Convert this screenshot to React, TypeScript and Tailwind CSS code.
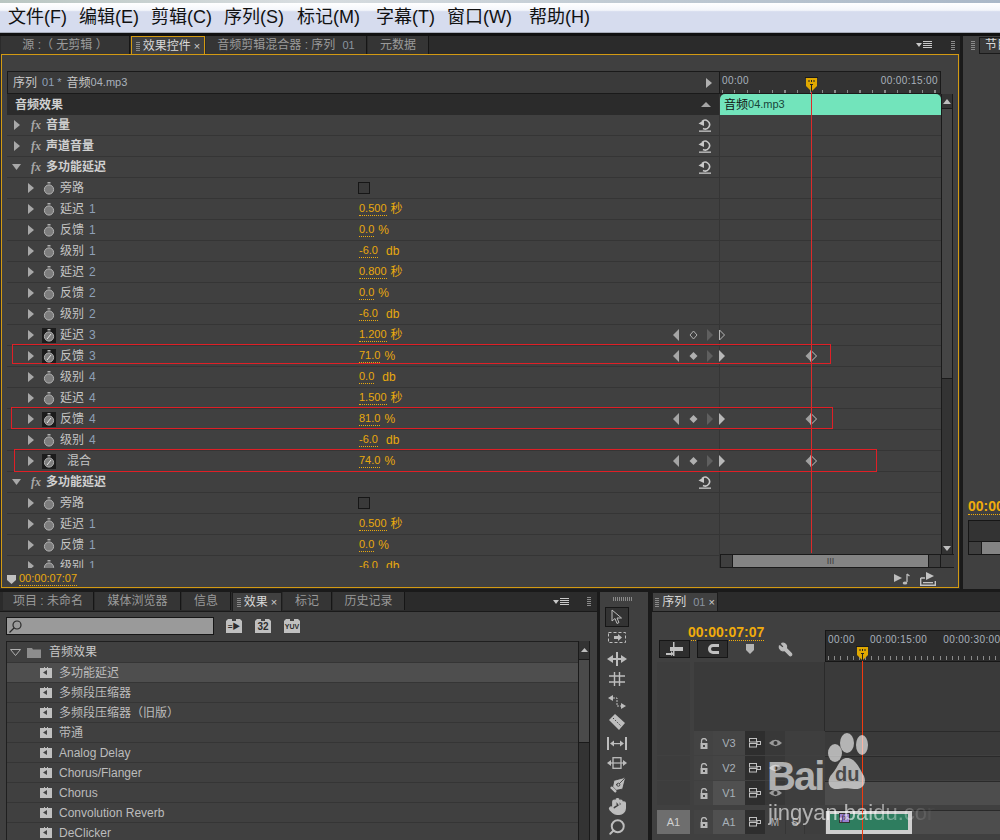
import React from 'react';
import { Hand, PenTool, Search, Wrench } from 'lucide-react';

type ParamRow = {
  name: string;
  num?: string;
  value?: string;
  unit?: string;
  active?: boolean;
  nav?: 'open' | 'filled';
  kf?: boolean;
  bypass?: boolean;
  indent?: boolean;
};

const params: ParamRow[] = [
  { name: '旁路', bypass: true },
  { name: '延迟', num: '1', value: '0.500', unit: '秒' },
  { name: '反馈', num: '1', value: '0.0', unit: '%' },
  { name: '级别', num: '1', value: '-6.0', unit: 'db' },
  { name: '延迟', num: '2', value: '0.800', unit: '秒' },
  { name: '反馈', num: '2', value: '0.0', unit: '%' },
  { name: '级别', num: '2', value: '-6.0', unit: 'db' },
  { name: '延迟', num: '3', value: '1.200', unit: '秒', active: true, nav: 'open' },
  { name: '反馈', num: '3', value: '71.0', unit: '%', active: true, nav: 'filled', kf: true },
  { name: '级别', num: '4', value: '0.0', unit: 'db' },
  { name: '延迟', num: '4', value: '1.500', unit: '秒' },
  { name: '反馈', num: '4', value: '81.0', unit: '%', active: true, nav: 'filled', kf: true },
  { name: '级别', num: '4', value: '-6.0', unit: 'db' },
  { name: '混合', value: '74.0', unit: '%', active: true, nav: 'filled', kf: true, indent: true },
];

const secondGroup: ParamRow[] = [
  { name: '旁路', bypass: true },
  { name: '延迟', num: '1', value: '0.500', unit: '秒' },
  { name: '反馈', num: '1', value: '0.0', unit: '%' },
  { name: '级别', num: '1', value: '-6.0', unit: 'db' },
];

const effects = ['多功能延迟', '多频段压缩器', '多频段压缩器（旧版）', '带通', 'Analog Delay', 'Chorus/Flanger', 'Chorus', 'Convolution Reverb', 'DeClicker'];

function Twirl({ open = false }: { open?: boolean }) {
  return (
    <svg width="10" height="10" viewBox="0 0 10 10" className="shrink-0">
      {open ? <polygon points="0,2 9,2 4.5,8" fill="#a8a8a8" /> : <polygon points="2,0 8,5 2,10" fill="#a8a8a8" />}
    </svg>
  );
}

function Stopwatch({ active }: { active?: boolean }) {
  return (
    <div className={`w-[14px] h-[15px] flex items-center justify-center shrink-0 ${active ? 'bg-[#1b1b1b]' : ''}`}>
      <svg width="12" height="13" viewBox="0 0 12 13">
        <rect x="4.5" y="0" width="3" height="1.5" fill="#b0b0b0" />
        <circle cx="6" cy="7.5" r="4.6" fill="#7d7d7d" stroke="#b5b5b5" strokeWidth="1" />
        {active && <line x1="4" y1="10" x2="8" y2="5" stroke="#e8e8e8" strokeWidth="1" />}
      </svg>
    </div>
  );
}

function ResetIcon() {
  return (
    <svg width="14" height="15" viewBox="0 0 14 15" className="shrink-0">
      <path d="M4 3.5 A4.4 4.4 0 1 1 5 10.5" fill="none" stroke="#c8c8c8" strokeWidth="1.6" />
      <polygon points="0.5,5.5 6,2 6,8" fill="#c8c8c8" />
      <rect x="1" y="12.5" width="12" height="1.3" fill="#c8c8c8" />
    </svg>
  );
}

function KeyNav({ mode }: { mode: 'open' | 'filled' }) {
  return (
    <svg width="53" height="12" viewBox="0 0 53 12" className="shrink-0 ml-auto -mr-[7px] relative">
      <polygon points="0,6 6,0 6,12" fill="#a5a5a5" />
      {mode === 'filled' ? (
        <polygon points="20.5,2 24.5,6 20.5,10 16.5,6" fill="#b0b0b0" />
      ) : (
        <polygon points="20.5,2 24,6 20.5,10 17,6" fill="none" stroke="#b0b0b0" />
      )}
      <polygon points="34,0 40,6 34,12" fill="#5f5f5f" />
      {mode === 'filled' ? (
        <polygon points="46,0 52,6 46,12" fill="#b8b8b8" />
      ) : (
        <polygon points="46.5,1 51.5,6 46.5,11" fill="none" stroke="#b8b8b8" />
      )}
    </svg>
  );
}

function Keyframe() {
  return (
    <svg width="12" height="12" viewBox="0 0 12 12" className="shrink-0">
      <polygon points="6,0.5 0.5,6 6,11.5" fill="#a0a0a0" />
      <polygon points="6,0.5 11.5,6 6,11.5" fill="none" stroke="#c4c4c4" />
    </svg>
  );
}

function MarkerHead() {
  return (
    <svg width="13" height="15" viewBox="0 0 13 15" className="shrink-0">
      <rect x="0" y="0" width="13" height="1" fill="#1b1b1b" />
      <polygon points="1,1 12,1 12,9 7,14 6,14 1,9" fill="#e0a800" />
      <rect x="3.5" y="3" width="1" height="2" fill="#222" />
      <rect x="6" y="3" width="1" height="2" fill="#222" />
      <rect x="8.5" y="3" width="1" height="2" fill="#222" />
      <rect x="5" y="7" width="3" height="1" fill="#222" />
      <rect x="6" y="7" width="1" height="7" fill="#222" />
    </svg>
  );
}

function Grip() {
  return (
    <div className="flex flex-col gap-[1px] w-[4px] shrink-0">
      {[0, 1, 2, 3, 4].map((i) => (
        <div key={i} className="h-[1px] bg-[#8a8a8a]" />
      ))}
    </div>
  );
}

function PanelMenu() {
  return (
    <svg width="16" height="8" viewBox="0 0 16 8" className="shrink-0">
      <polygon points="0,2 6,2 3,6" fill="#c8c8c8" />
      <rect x="7" y="0" width="9" height="1" fill="#c8c8c8" />
      <rect x="7" y="2" width="9" height="1" fill="#c8c8c8" />
      <rect x="7" y="4" width="9" height="1" fill="#c8c8c8" />
      <rect x="7" y="6" width="9" height="1" fill="#c8c8c8" />
    </svg>
  );
}

function Tab({ w, label, num, active, amber }: { w: number; label: string; num?: string; active?: boolean; amber?: boolean }) {
  const box = active
    ? amber
      ? 'bg-[#404040] border-x border-t border-[#d39a12] text-[#d8d8d8] h-[19px] -mb-[1px] relative'
      : 'bg-[#404040] border-x border-t border-[#1c1c1c] text-[#d8d8d8] h-[19px] -mb-[1px] relative'
    : 'bg-[#353535] border-r border-[#161616] text-[#9a9a9a] h-[18px]';
  return (
    <div style={{ width: w }} className={`flex items-center justify-center gap-[3px] text-[12px] whitespace-nowrap shrink-0 mr-[1px] ${box}`}>
      {active && <Grip />}
      <span>{label}</span>
      {num && <span className="text-[#8b94a0] text-[11px] ml-1">{num}</span>}
      {active && <span className="text-[#cfcfcf] text-[11px] leading-none">×</span>}
    </div>
  );
}

function ParamLine({ p }: { p: ParamRow }) {
  return (
    <div className="flex h-[21px] border-b border-[#353535] shrink-0">
      <div className="w-[713px] border-r border-[#353535] flex items-center shrink-0">
        <div className="w-[352px] flex items-center pl-[19px] shrink-0">
          <Twirl />
          <div className="w-[6px] shrink-0" />
          <Stopwatch active={p.active} />
          <span className={`text-[12px] text-[#c4c4c4] ml-[4px] whitespace-nowrap ${p.indent ? 'pl-[7px]' : ''}`}>{p.name}</span>
          {p.num && <span className="text-[12px] text-[#8fa0b8] ml-[5px]">{p.num}</span>}
        </div>
        <div className="flex items-center shrink-0">
          {p.bypass ? (
            <div className="w-[12px] h-[12px] -ml-[1px] bg-[#3a3a3a] border border-[#161616]" />
          ) : (
            <>
              <span className="text-[11px] leading-[13px] text-[#e9a90e] border-b border-dotted border-[#e9a90e]">{p.value}</span>
              <span className={`text-[12px] leading-[13px] text-[#e9a90e] ${p.unit === 'db' ? 'ml-[8px]' : 'ml-[4px]'}`}>{p.unit}</span>
            </>
          )}
        </div>
        {p.nav && <KeyNav mode={p.nav} />}
      </div>
      <div className="flex-1 flex items-center pl-[85px]">{p.kf && <Keyframe />}</div>
    </div>
  );
}

function FxLine({ label, open, reset = true }: { label: string; open?: boolean; reset?: boolean }) {
  return (
    <div className="flex h-[21px] border-b border-[#353535] shrink-0">
      <div className="w-[713px] border-r border-[#353535] flex items-center pl-[5px] shrink-0">
        <Twirl open={open} />
        <span className="ml-[9px] w-[15px] text-[12px] italic text-[#a8a8a8] [font-family:'Liberation_Serif',serif] font-bold">fx</span>
        <span className="text-[12px] font-bold text-[#d0d0d0] whitespace-nowrap">{label}</span>
        {reset && <div className="ml-auto mr-[7px]"><ResetIcon /></div>}
      </div>
      <div className="flex-1" />
    </div>
  );
}

function EffectControls() {
  return (
    <div className="relative flex-1 mx-[1px] mb-[1px] border border-[#d39a12] bg-[#404040] pt-[16px] pl-[5px] pr-[4px] flex flex-col">
      <div className="flex h-[23px] w-[934px] shrink-0">
        <div className="w-[713px] bg-[#3a3a3a] border border-[#1a1a1a] flex items-center pl-[5px] pr-[7px] text-[12px] text-[#c8c8c8] shrink-0">
          <span>序列</span>
          <span className="text-[#8fa0b8] text-[11px] ml-[5px]">01 *</span>
          <span className="ml-[5px]">音频</span>
          <span className="text-[#aab2bc] text-[11px]">04.mp3</span>
          <svg width="6" height="10" viewBox="0 0 6 10" className="ml-auto"><polygon points="0,0 6,5 0,10" fill="#b0b0b0" /></svg>
        </div>
        <div className="flex-1 bg-[#333333] border-y border-r border-[#1a1a1a] flex flex-col px-[2px]">
          <div className="flex justify-between text-[10px] text-[#a9b2bc] tracking-[0.4px] pt-[1px]">
            <span>00:00</span>
            <span>00:00:15:00</span>
          </div>
          <div className="mt-auto h-[3px] bg-[repeating-linear-gradient(90deg,#8a8a8a_0,#8a8a8a_1px,transparent_1px,transparent_12.5px)]" />
        </div>
      </div>
      <div className="flex h-[474px] w-[946px] shrink-0">
        <div className="w-[934px] h-[474px] overflow-hidden flex flex-col">
          <div className="flex h-[21px] bg-[#2b2b2b] shrink-0">
            <div className="w-[713px] flex items-center pl-[8px] pr-[7px] shrink-0 border-r border-[#353535]">
              <span className="text-[12px] font-bold text-[#d0d0d0]">音频效果</span>
              <svg width="10" height="5" viewBox="0 0 10 5" className="ml-auto mr-[1px]"><polygon points="5,0 10,5 0,5" fill="#a5a5a5" /></svg>
            </div>
            <div className="flex-1 bg-[#72e4bb] rounded-t-[5px] text-[12px] text-[#111] flex items-center pl-[4px]">
              音频<span className="text-[11px] text-[#17463a]">04.mp3</span>
            </div>
          </div>
          <FxLine label="音量" />
          <FxLine label="声道音量" />
          <FxLine label="多功能延迟" open />
          {params.map((p, i) => (
            <ParamLine key={i} p={p} />
          ))}
          <FxLine label="多功能延迟" open />
          {secondGroup.map((p, i) => (
            <ParamLine key={i} p={p} />
          ))}
        </div>
        {/* vertical scrollbar */}
        <div className="w-[12px] bg-[#333333] border-x border-[#1a1a1a] flex flex-col items-center">
          <div className="h-[14px] flex items-center"><svg width="8" height="5" viewBox="0 0 8 5"><polygon points="4,0 8,5 0,5" fill="#bdbdbd" /></svg></div>
          <div className="w-full h-[271px] bg-[#454545] border-y border-[#1a1a1a]" />
          <div className="mt-auto mb-[17px]"><svg width="8" height="5" viewBox="0 0 8 5"><polygon points="0,0 8,0 4,5" fill="#bdbdbd" /></svg></div>
        </div>
      </div>
      <div className="flex items-center h-[18px] pt-[4px] pr-[18px] shrink-0">
        <svg width="9" height="9" viewBox="0 0 9 9" className="mr-[3px]"><polygon points="0,0 9,0 9,5 4.5,9 0,5" fill="#c0c0c0" /></svg>
        <span className="text-[11px] leading-[13px] text-[#e9a90e] border-b border-dotted border-[#e9a90e]">00:00:07:07</span>
        <svg width="16" height="12" viewBox="0 0 16 12" className="ml-auto">
          <polygon points="0,1 8,5 0,9" fill="#bcbcbc" />
          <path d="M13 1 L13 9 M13 1 L15.5 3" stroke="#bcbcbc" strokeWidth="1.3" fill="none" />
          <ellipse cx="11" cy="10" rx="2.3" ry="1.6" fill="#bcbcbc" />
        </svg>
        <svg width="16" height="14" viewBox="0 0 16 14" className="ml-[10px]">
          <path d="M0.7 6 L5 6 M0.7 6 L0.7 13.3 L15.3 13.3 L15.3 9" stroke="#c4c4c4" strokeWidth="1.4" fill="none" />
          <polygon points="6,0 14,4 6,8" fill="#c4c4c4" />
          <rect x="3" y="10" width="10" height="1.3" fill="#c4c4c4" />
        </svg>
      </div>

      {/* horizontal scrollbar lies over the last row */}
      <div className="absolute left-[718px] top-[499px] w-[234px] h-[14px] flex bg-[#333333] border-y border-[#1a1a1a]">
        <div className="w-[13px] bg-[#3f3f3f] border-x border-[#1a1a1a]" />
        <div className="w-[195px] bg-[#848484] flex items-center justify-center text-[9px] leading-none text-[#3c3c3c]">III</div>
        <div className="w-[13px] bg-[#3f3f3f] border-x border-[#1a1a1a]" />
        <div className="flex-1 bg-[#3d3d3d]" />
      </div>

      {/* playhead */}
      <div className="absolute left-[803px] top-[22px]">
        <MarkerHead />
      </div>
      <div className="absolute left-[809px] top-[37px] w-[1px] h-[461px] bg-[#dd2a2a]" />
    </div>
  );
}

function Tool({ children, boxed }: { children: React.ReactNode; boxed?: boolean }) {
  return (
    <div className={`w-[24px] h-[20px] flex items-center justify-center shrink-0 ${boxed ? 'bg-[#333333] border border-[#161616]' : ''}`}>
      {children}
    </div>
  );
}

function ToolsPanel() {
  const c = '#bdbdbd';
  return (
    <div className="w-[48px] bg-[#404040] flex flex-col items-start pl-[5px] pt-[5px] shrink-0">
      <div className="w-[20px] h-[4px] mb-[6px] ml-[8px] bg-[repeating-linear-gradient(90deg,#8a8a8a_0,#8a8a8a_1px,transparent_1px,transparent_2px)]" />
      <Tool boxed>
        <svg width="12" height="16" viewBox="0 0 12 16"><path d="M1 1 L1 12 L4 9.5 L6 14.5 L8 13.5 L6 9 L10.5 9 Z" fill="#333" stroke={c} /></svg>
      </Tool>
      <Tool>
        <svg width="18" height="11" viewBox="0 0 18 11">
          <rect x="0.5" y="0.5" width="17" height="10" fill="none" stroke={c} strokeDasharray="3 2" />
          <polygon points="6,4 10,4 10,2 14,5.5 10,9 10,7 6,7" fill={c} />
        </svg>
      </Tool>
      <div className="h-[2px]" />
      <Tool>
        <svg width="20" height="14" viewBox="0 0 20 14">
          <polygon points="0,7 6,3 6,11" fill={c} /><polygon points="20,7 14,3 14,11" fill={c} />
          <rect x="9" y="0" width="2" height="14" fill={c} /><rect x="6" y="6" width="8" height="2" fill={c} />
        </svg>
      </Tool>
      <Tool>
        <svg width="16" height="14" viewBox="0 0 16 14" stroke={c} strokeWidth="1.4" fill="none">
          <path d="M5.5 0 V14 M10.5 0 V14 M0 4 H16 M0 10 H16" />
        </svg>
      </Tool>
      <div className="h-[3px]" />
      <Tool>
        <svg width="18" height="14" viewBox="0 0 18 14">
          <polygon points="0,3 5,0 5,6" fill={c} /><polygon points="18,11 13,8 13,14" fill={c} />
          <path d="M5 3 H9 V11 H13" stroke={c} fill="none" strokeDasharray="2 1" />
        </svg>
      </Tool>
      <Tool>
        <svg width="16" height="16" viewBox="0 0 16 16">
          <polygon points="6,0 16,9 10,16 0,6" fill={c} /><line x1="4" y1="4" x2="12" y2="12" stroke="#404040" strokeDasharray="1.5 1.5" />
        </svg>
      </Tool>
      <div className="h-[1px]" />
      <Tool>
        <svg width="20" height="13" viewBox="0 0 20 13" fill={c}>
          <rect x="0" y="0" width="2" height="13" /><rect x="18" y="0" width="2" height="13" />
          <polygon points="3,6.5 7,3.5 7,9.5" /><polygon points="17,6.5 13,3.5 13,9.5" /><rect x="7" y="6" width="6" height="1.2" />
        </svg>
      </Tool>
      <Tool>
        <svg width="20" height="12" viewBox="0 0 20 12">
          <polygon points="0,6 4,3 4,9" fill={c} /><polygon points="20,6 16,3 16,9" fill={c} />
          <rect x="6" y="0.7" width="8" height="10.6" fill="none" stroke={c} strokeWidth="1.3" /><rect x="4" y="5.4" width="12" height="1.2" fill={c} />
        </svg>
      </Tool>
      <div className="h-[2px]" />
      <Tool><PenTool size={19} color="#333" fill={c} strokeWidth={1} className="-scale-x-100" /></Tool>
      <div className="h-[1px]" />
      <Tool><Hand size={19} color={c} fill={c} strokeWidth={1.5} /></Tool>
      <div className="h-[1px]" />
      <Tool><Search size={18} color={c} strokeWidth={2.6} className="-scale-x-100" /></Tool>
    </div>
  );
}

function TrackRow({ name, side, kind }: { name: string; side?: string; kind: 'v' | 'a' }) {
  const lit = name === 'V1' || name === 'A1';
  return (
    <div className="flex h-[24px] mb-[1px] shrink-0">
      <div className={`w-[33px] flex items-center justify-center text-[11px] shrink-0 ${side ? 'bg-[#6e6e6e] text-[#d0d0d0]' : 'bg-[#3d3d3d]'}`}>{side}</div>
      <div className="w-[4px] shrink-0" />
      <div className="w-[131px] flex shrink-0">
        <div className="w-[19px] bg-[#434343] flex items-center justify-center">
          <svg width="8" height="11" viewBox="0 0 8 11">
            <path d="M1.5 5 V3 A2.5 2.5 0 0 1 6.5 3" fill="none" stroke="#b8b8b8" strokeWidth="1.3" />
            <rect x="0.5" y="5" width="7" height="6" fill="#b8b8b8" /><rect x="3" y="7" width="2" height="2" fill="#434343" />
          </svg>
        </div>
        <div className={`w-[32px] flex items-center justify-center text-[11px] text-[#a8b0b8] ${lit ? 'bg-[#505050]' : 'bg-[#454545]'}`}>{name}</div>
        <div className="w-[20px] bg-[#2e2e2e] flex items-center justify-center">
          <svg width="12" height="10" viewBox="0 0 12 10" fill="none" stroke="#c0c0c0">
            <rect x="0.5" y="0.5" width="7" height="3.5" /><rect x="0.5" y="5.5" width="7" height="3.5" /><rect x="8" y="3.5" width="3.5" height="3" />
          </svg>
        </div>
        {kind === 'v' ? (
          <div className="w-[20px] bg-[#383838] flex items-center justify-center">
            <svg width="13" height="8" viewBox="0 0 13 8"><path d="M0 4 Q6.5 -2.5 13 4 Q6.5 10.5 0 4 Z" fill="#9a9a9a" /><circle cx="6.5" cy="4" r="2" fill="#333" /></svg>
          </div>
        ) : (
          <>
            <div className="w-[20px] bg-[#404040] flex items-center justify-center text-[10px] text-[#b0b0b0]">M</div>
            <div className="w-[20px] bg-[#404040] border-x border-[#363636] flex items-center justify-center text-[10px] text-[#b0b0b0]">S</div>
          </>
        )}
        <div className="flex-1 bg-[#3e3e3e]" />
      </div>
      <div className={`flex-1 border-t border-[#2a2a2a] ${lit ? 'bg-[#4d4d4d]' : 'bg-[#3a3a3a]'}`}>
        {kind === 'a' && (
          <div className="w-[86px] h-[23px] ml-[1px] bg-[#cfcfcf] px-[4px] pt-[3px]">
            <div className="h-[16px] bg-[#2e7d5f]">
              <div className="w-[11px] h-[10px] ml-[9px] relative -top-[1px] bg-[#9b7fd0] border border-[#333] text-[8px] leading-[8px] italic text-[#222] text-center [font-family:'Liberation_Serif',serif]">fx</div>
            </div>
          </div>
        )}
      </div>
    </div>
  );
}

function Timeline() {
  return (
    <div className="relative flex-1 bg-[#404040] flex flex-col">
      <div className="flex h-[20px] bg-[#2b2b2b] border-b border-[#1a1a1a] shrink-0">
        <Tab w={66} label="序列" num="01" active />
      </div>
      <div className="flex h-[50px] shrink-0">
        <div className="w-[173px] shrink-0 pl-[7px] flex flex-col">
          <div className="pl-[29px] pt-[8px] h-[28px]">
            <span className="text-[14px] leading-[15px] font-bold text-[#f0ac0c] border-b border-dotted border-[#f0ac0c] inline-block">00:00:07:07</span>
          </div>
          <div className="flex items-center">
            <div className="w-[31px] h-[18px] bg-[#2e2e2e] border border-[#161616] flex items-center justify-center">
              <svg width="17" height="14" viewBox="0 0 17 14" fill="#c0c0c0"><rect x="7" y="0" width="1.5" height="14" /><rect x="4" y="5" width="13" height="4" /><polygon points="0,11 5,11 5,9 8,12 5,14 5,13 0,13" /></svg>
            </div>
            <div className="w-[31px] h-[18px] ml-[7px] bg-[#2e2e2e] border border-[#161616] flex items-center justify-center">
              <svg width="14" height="12" viewBox="0 0 14 12"><path d="M13 2.5 H7 A3.5 3.5 0 0 0 7 9.5 H13" fill="none" stroke="#c0c0c0" strokeWidth="3" /></svg>
            </div>
            <svg width="10" height="11" viewBox="0 0 10 11" className="ml-[17px]"><polygon points="1,0 9,0 9,6 5,10 1,6" fill="#b4b4b4" /></svg>
            <div className="ml-[23px]"><Wrench size={15} color="#bcbcbc" fill="#bcbcbc" className="-scale-x-100" /></div>
          </div>
        </div>
        <div className="flex-1 mt-[18px] bg-[#2c2c2c] border-y border-l border-[#161616] flex flex-col pl-[2px]">
          <div className="flex text-[10px] text-[#a9b2bc] tracking-[0.4px] pt-[1px] whitespace-nowrap overflow-hidden">
            <span>00:00</span>
            <span className="ml-[15px]">00:00:15:00</span>
            <span className="ml-[16px]">00:00:30:00</span>
          </div>
          <div className="mt-auto h-[4px] mb-[1px] bg-[repeating-linear-gradient(90deg,#8a8a8a_0,#8a8a8a_1px,transparent_1px,transparent_6.2px)]" />
        </div>
      </div>
      <div className="flex-1 pl-[5px] flex flex-col">
        <div className="flex h-[69px] shrink-0">
          <div className="w-[33px] bg-[#3d3d3d] shrink-0" />
          <div className="w-[4px] shrink-0" />
          <div className="w-[131px] bg-[#3a3a3a] border-r border-[#2a2a2a] shrink-0" />
          <div className="flex-1 bg-[#3a3a3a]" />
        </div>
        <TrackRow name="V3" kind="v" />
        <TrackRow name="V2" kind="v" />
        <TrackRow name="V1" kind="v" />
        <div className="h-[4px] shrink-0" />
        <TrackRow name="A1" side="A1" kind="a" />
      </div>

      {/* playhead */}
      <div className="absolute left-[204px] top-[54px]"><MarkerHead /></div>
      <div className="absolute left-[210px] top-[69px] bottom-0 w-[1px] bg-[#f03a10]" />
    </div>
  );
}

function ProjectPanel() {
  const chip = 'w-[16px] h-[14px] bg-[#c0c0c0] text-[#2c2c2c] font-bold text-center [clip-path:polygon(0_2px,2px_0,6px_0,6px_2px,10px_2px,10px_0,14px_0,100%_2px,100%_100%,0_100%)]';
  return (
    <div className="w-[597px] bg-[#404040] flex flex-col shrink-0">
      <div className="flex h-[20px] items-start pl-[3px] bg-[#2b2b2b] border-b border-[#1a1a1a] shrink-0">
        <Tab w={91} label="项目 : 未命名" />
        <Tab w={86} label="媒体浏览器" />
        <Tab w={49} label="信息" />
        <Tab w={50} label="效果" active />
        <Tab w={49} label="标记" />
        <Tab w={72} label="历史记录" />
        <div className="ml-auto mr-[18px] self-center"><PanelMenu /></div>
        <div className="mr-[6px] self-center"><Grip /></div>
      </div>
      <div className="flex items-center h-[29px] pb-[1px] pl-[6px] shrink-0">
        <div className="w-[208px] h-[18px] bg-[#9a9a9a] border border-[#161616] flex items-center pl-[2px]">
          <svg width="13" height="13" viewBox="0 0 13 13" fill="none" stroke="#2a2a2a" strokeWidth="1.2"><circle cx="8" cy="5" r="4" /><line x1="5" y1="8" x2="0.5" y2="12.5" /></svg>
        </div>
        <div className={`ml-[12px] text-[8px] leading-[15px] ${chip}`}>=▶</div>
        <div className={`ml-[13px] text-[10px] leading-[15px] ${chip}`}>32</div>
        <div className={`ml-[13px] text-[7px] leading-[15px] ${chip}`}>YUV</div>
      </div>
      <div className="flex flex-1 pl-[6px] pr-[7px] min-h-0">
        <div className="flex-1 border-t border-l border-[#1f1f1f] flex flex-col overflow-hidden">
          <div className="flex items-center h-[21px] pl-[3px] border-b border-[#353535] shrink-0">
            <svg width="11" height="7" viewBox="0 0 11 7"><polygon points="0.5,0.5 10.5,0.5 5.5,6.5" fill="none" stroke="#b0b0b0" /></svg>
            <svg width="14" height="11" viewBox="0 0 14 11" className="ml-[6px]"><path d="M0 1 H5 L6 2.5 H14 V11 H0 Z" fill="#8d8d8d" /></svg>
            <span className="ml-[8px] text-[12px] text-[#c8c8c8]">音频效果</span>
          </div>
          {effects.map((e, i) => (
            <div key={e} className={`flex items-center h-[20px] pl-[33px] border-b border-[#353535] shrink-0 ${i === 0 ? 'bg-[#4e4e4e]' : ''}`}>
              <svg width="12" height="11" viewBox="0 0 12 11">
                <path d="M0 1 H4 V0 H5 V1 H7 V0 H8 V1 H12 V11 H0 Z" fill="#c0c0c0" />
                <polygon points="3,5.5 7,3 7,8" fill="#444" />
              </svg>
              <span className="ml-[7px] text-[12px] text-[#bcbcbc] whitespace-nowrap">{e}</span>
            </div>
          ))}
        </div>
        <div className="w-[12px] bg-[#333333] border-x border-[#1a1a1a] flex flex-col items-center shrink-0">
          <div className="h-[18px] flex items-center"><svg width="7" height="4" viewBox="0 0 7 4"><polygon points="3.5,0 7,4 0,4" fill="#bdbdbd" /></svg></div>
          <div className="w-full h-[84px] bg-[#4a4a4a] border-y border-[#1a1a1a]" />
        </div>
      </div>
    </div>
  );
}

export default function App() {
  return (
    <div className="relative w-[1000px] h-[840px] overflow-hidden bg-[#1a1a1a] flex flex-col [font-family:'Liberation_Sans','Noto_Sans_CJK_SC',sans-serif]">
      {/* window menu */}
      <div className="h-[3px] bg-[linear-gradient(90deg,#b9c6c2,#d8dde0_30%,#c2ccd4_60%,#aab8c8)] shrink-0" />
      <div className="h-[30px] shrink-0 flex items-center gap-[12px] pl-[8px] bg-[linear-gradient(180deg,#ffffff_0%,#f4f6fb_25%,#d6dcee_30%,#d6dcee_100%)] border-b border-[#a7adba] text-[18px] text-[#111] whitespace-nowrap">
        <span>文件(F)</span>
        <span>编辑(E)</span>
        <span>剪辑(C)</span>
        <span>序列(S)</span>
        <span className="ml-[1px] mr-[4px]">标记(M)</span>
        <span>字幕(T)</span>
        <span className="mr-[5px]">窗口(W)</span>
        <span>帮助(H)</span>
      </div>
      <div className="h-[3px] bg-[#111] shrink-0" />

      {/* upper panels */}
      <div className="flex h-[553px] shrink-0">
        <div className="w-[960px] flex flex-col bg-[#2b2b2b] shrink-0">
          <div className="flex items-end h-[18px] pl-[1px] shrink-0">
            <Tab w={129} label="源 :（ 无剪辑 ）" />
            <Tab w={74} label="效果控件" active amber />
            <Tab w={161} label="音频剪辑混合器 : 序列" num="01" />
            <Tab w={61} label="元数据" />
            <div className="ml-auto mr-[19px] self-center"><PanelMenu /></div>
            <div className="mr-[5px] self-center"><Grip /></div>
          </div>
          <EffectControls />
        </div>
        <div className="flex-1 ml-[3px] bg-[#404040] flex flex-col pl-[5px] overflow-hidden">
          <div className="flex items-center h-[18px] pl-[3px] gap-[4px] shrink-0 whitespace-nowrap">
            <Grip />
            <div className="bg-[#3a3a3a] border border-[#1a1a1a] text-[12px] text-[#d8d8d8] pl-[5px] h-[17px] leading-[15px] flex-1">节目</div>
          </div>
          <div className="mt-[445px] text-[14px] font-bold text-[#f0ac0c] border-b border-dotted border-[#f0ac0c] leading-[15px] whitespace-nowrap">00:00</div>
          <div className="mt-[5px] h-[21px] bg-[#333333] border-t border-l border-[#161616] shrink-0" />
          <div className="h-[14px] flex border-y border-l border-[#161616] shrink-0">
            <div className="w-[13px] bg-[#3f3f3f] border-r border-[#1a1a1a]" />
            <div className="flex-1 bg-[#848484]" />
          </div>
        </div>
      </div>
      <div className="h-[3px] shrink-0" />

      {/* lower panels */}
      <div className="flex flex-1 min-h-0">
        <ProjectPanel />
        <div className="w-[3px] shrink-0" />
        <ToolsPanel />
        <div className="w-[4px] shrink-0" />
        <Timeline />
      </div>

      {/* annotation boxes drawn over the screenshot */}
      <div className="absolute left-[12px] top-[344px] w-[819px] h-[20px] border border-[#e01f26]" />
      <div className="absolute left-[11px] top-[407px] w-[822px] h-[22px] border border-[#e01f26]" />
      <div className="absolute left-[14px] top-[449px] w-[863px] h-[23px] border border-[#e01f26]" />

      {/* watermark */}
      <div className="absolute left-[767px] top-[732px] w-[210px] h-[100px] pointer-events-none">
        <svg width="60" height="62" viewBox="0 0 60 62" className="absolute left-[59px] top-0" fill="#ffffff" fillOpacity="0.62">
          <ellipse cx="9" cy="21" rx="7" ry="9" />
          <ellipse cx="21" cy="11" rx="7" ry="10" />
          <ellipse cx="36" cy="13" rx="6" ry="10" />
          <path d="M21 26 C30 26 34 38 38 44 C41 52 36 58 28 57 C22 56 18 56 12 57 C2 58 0 48 6 42 C12 36 13 26 21 26 Z" />
        </svg>
        <span className="absolute left-[68px] top-[30px] text-[20px] leading-[24px] font-bold text-[#4a4a4a]">du</span>
        <span className="absolute left-0 top-[22px] text-[40px] leading-[44px] font-bold tracking-[-2px] text-white/60">Bai</span>
        <span className="absolute left-[1px] top-[68px] text-[22px] leading-[26px] whitespace-nowrap text-white/60 [mask-image:linear-gradient(90deg,#000_55%,transparent_95%)]">jingyan.baidu.com</span>
      </div>
    </div>
  );
}
